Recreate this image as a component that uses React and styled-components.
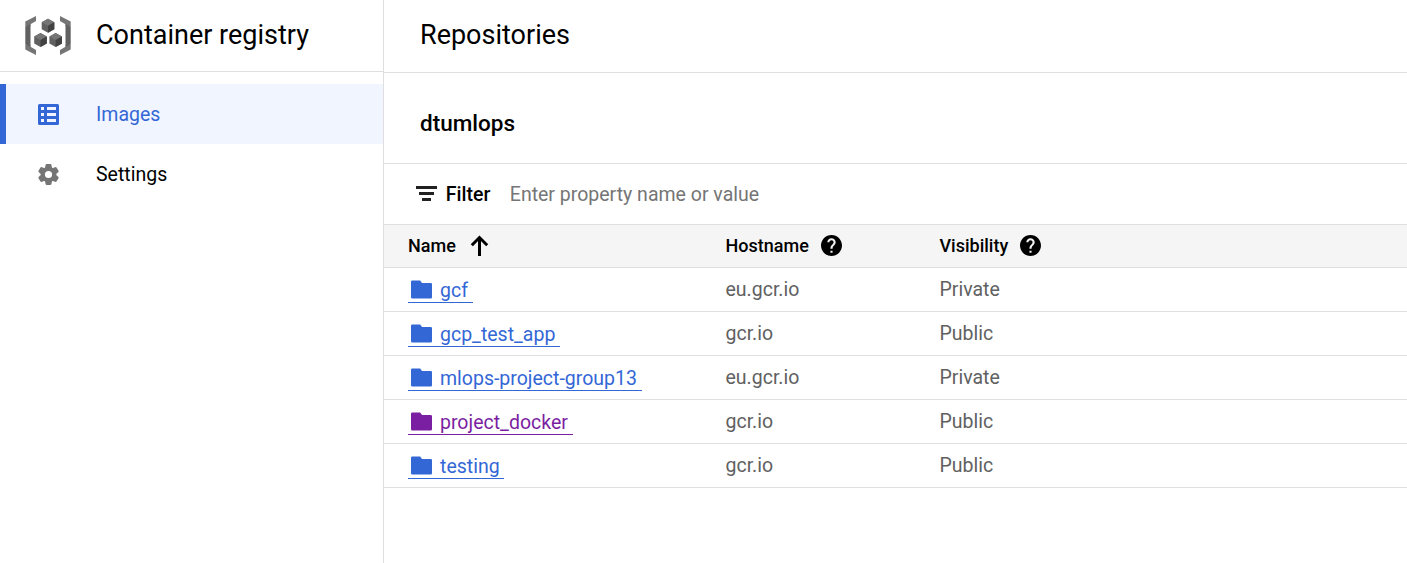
import React from "react";
import styled, { createGlobalStyle } from "styled-components";

const GlobalStyle = createGlobalStyle`
  *, *::before, *::after { box-sizing: border-box; }
  body {
    margin: 0;
    background: #fff;
    color: #000;
    font-family: Roboto, "Liberation Sans", sans-serif;
    font-size: 19.5px;
    overflow: hidden;
  }
  svg { display: block; flex: none; }
`;

const line = "#dfdfdf";
const blue = "#3367d6";
const purple = "#7b1fa2";

const Page = styled.div`
  display: flex;
  height: 100vh;
`;

const Sidebar = styled.aside`
  flex: none;
  width: 384px;
  border-right: 1px solid ${line};
`;

const Product = styled.header`
  display: flex;
  align-items: center;
  gap: 24px;
  height: 72px;
  padding: 0 0 2px 24px;
  border-bottom: 1px solid ${line};
`;

const ProductName = styled.h1`
  margin: 0;
  font-size: 27px;
  font-weight: 400;
  line-height: 36px;
`;

const Nav = styled.nav`
  padding-top: 12px;
`;

const NavItem = styled.a`
  display: flex;
  align-items: center;
  gap: 34px;
  height: 60px;
  padding-left: 29px;
  border-left: 6px solid ${(p) => (p.$active ? blue : "transparent")};
  background: ${(p) => (p.$active ? "#f0f5ff" : "transparent")};
  color: ${(p) => (p.$active ? blue : "#000")};
`;

const Main = styled.main`
  flex: 1;
  min-width: 0;
`;

const PageHeader = styled.header`
  display: flex;
  align-items: center;
  height: 73px;
  padding: 0 36px 3px;
  border-bottom: 1px solid ${line};
`;

const PageTitle = styled.h2`
  margin: 0;
  font-size: 27px;
  font-weight: 400;
  line-height: 36px;
`;

const Project = styled.div`
  display: flex;
  align-items: center;
  height: 91px;
  padding: 10px 36px 0;
  border-bottom: 1px solid ${line};
  font-size: 22.5px;
  font-weight: 500;
`;

const FilterBar = styled.div`
  display: flex;
  align-items: center;
  height: 61px;
  padding-left: 32px;
  border-bottom: 1px solid ${line};
`;

const FilterLabel = styled.span`
  width: 64px;
  margin-left: 8.8px;
  font-weight: 500;
`;

const FilterHint = styled.span`
  color: #757575;
`;

const Row = styled.div`
  display: grid;
  grid-template-columns: 317.5px 214px 1fr;
  align-items: center;
  height: 44px;
  padding-left: 24px;
  border-bottom: 1px solid ${line};
  color: #616161;
`;

const HeadRow = styled(Row)`
  height: 43px;
  padding-bottom: 1px;
  background: #f5f5f5;
  color: #000;
  font-size: 18px;
  font-weight: 500;
`;

const HeadCell = styled.div`
  display: flex;
  align-items: center;
  gap: ${(p) => p.$gap || 12}px;
`;

const RepoLink = styled.a`
  display: inline-flex;
  align-items: center;
  justify-self: start;
  gap: 8px;
  height: 25px;
  margin-top: 1px;
  padding: 0 4.7px 0 3px;
  border-bottom: 1px solid currentColor;
  color: ${(p) => (p.$visited ? purple : blue)};
`;

const RepoName = styled.span`
  padding-top: 2px;
`;

const LogoSvg = styled.svg`
  margin-top: 3px;
`;

const Logo = () => (
  <LogoSvg width="48" height="42" viewBox="24 15 48 42">
    <g fill="#757575">
      <path d="M36 16v5l-5.5 3.2v1.8l-5.2.7v-5.2z" />
      <path d="M36 55v-5l-5.5-3.2V45l-5.2-.7v5.2z" />
      <path d="M60 16v5l5.5 3.2v1.8l5.2.7v-5.2z" />
      <path d="M60 55v-5l5.5-3.2V45l5.2-.7v5.2z" />
    </g>
    <path fill="#616161" d="M25.3 26.7l5.2-2.5v22.6l-5.2-2.5zM70.7 26.7l-5.2-2.5v22.6l5.2-2.5z" />
    {[[48, 18.8], [40.5, 33], [55.7, 33]].map(([x, y]) => (
      <g key={x} transform={`translate(${x} ${y})`}>
        <path fill="#616161" d="M0 0l6.3 3.5v7L0 14l-6.3-3.5v-7z" />
        <path fill="#757575" d="M0 0l6.3 3.5L0 7l-6.3-3.5z" />
        <path fill="#424242" d="M6.3 3.5v7L0 14V7z" />
      </g>
    ))}
  </LogoSvg>
);

const ImagesIcon = () => (
  <svg width="27" height="27" viewBox="-2 -2 18 18">
    <path
      fill={blue}
      fillRule="evenodd"
      d="M1 0h12a1 1 0 0 1 1 1v12a1 1 0 0 1-1 1H1a1 1 0 0 1-1-1V1a1 1 0 0 1 1-1zM2 2v2h2V2zM6 2v2h6V2zM2 6v2h2V6zM6 6v2h6V6zM2 10v2h2v-2zM6 10v2h6v-2z"
    />
  </svg>
);

const SettingsIcon = () => (
  <svg width="27" height="27" viewBox="-13.5 -13.5 27 27" fill="#757575">
    <circle r="7.8" />
    {[0, 60, 120].map((angle) => (
      <path
        key={angle}
        transform={`rotate(${angle})`}
        d="M-2.1-10.5h4.2l.8.7.6 3.3v13l-.6 3.3-.8.7h-4.2l-.8-.7-.6-3.3v-13l.6-3.3z"
      />
    ))}
    <circle r="3.6" fill="#fff" />
  </svg>
);

const FilterSvg = styled.svg`
  margin-bottom: 1px;
`;

const FilterIcon = () => (
  <FilterSvg width="21" height="15" viewBox="0 0 21 15" fill="#212121">
    <path d="M0 0h21v3H0zM3 6h15v3H3zM6 12h9v3H6z" />
  </FilterSvg>
);

const SortIcon = () => (
  <svg width="19" height="21" viewBox="0 0 19 21" fill="none" stroke="#000" strokeWidth="3">
    <path d="M9.5 21V2.5M1.8 10.2L9.5 2.5l7.7 7.7" />
  </svg>
);

const HelpIcon = () => (
  <svg width="21" height="21" viewBox="2 2 20 20">
    <path d="M12 2C6.48 2 2 6.48 2 12s4.48 10 10 10 10-4.48 10-10S17.52 2 12 2zm1 17h-2v-2h2v2zm2.07-7.75l-.9.92C13.45 12.9 13 13.5 13 15h-2v-.5c0-1.1.45-2.1 1.17-2.83l1.24-1.26c.37-.36.59-.86.59-1.41 0-1.1-.9-2-2-2s-2 .9-2 2H8c0-2.21 1.79-4 4-4s4 1.79 4 4c0 .88-.36 1.68-.93 2.25z" />
  </svg>
);

const FolderIcon = () => (
  <svg width="21" height="19" viewBox="0 0 21 19" fill="currentColor">
    <path d="M1.3.5H9.2l1.8 2.5h8.7A1.3 1.3 0 0 1 21 4.3v12.9a1.3 1.3 0 0 1-1.3 1.3H1.3A1.3 1.3 0 0 1 0 17.2V1.8A1.3 1.3 0 0 1 1.3.5z" />
  </svg>
);

const repositories = [
  { name: "gcf", host: "eu.gcr.io", visibility: "Private" },
  { name: "gcp_test_app", host: "gcr.io", visibility: "Public" },
  { name: "mlops-project-group13", host: "eu.gcr.io", visibility: "Private" },
  { name: "project_docker", host: "gcr.io", visibility: "Public", visited: true },
  { name: "testing", host: "gcr.io", visibility: "Public" },
];

export default function App() {
  return (
    <Page>
      <GlobalStyle />
      <Sidebar>
        <Product>
          <Logo />
          <ProductName>Container registry</ProductName>
        </Product>
        <Nav>
          <NavItem $active>
            <ImagesIcon />
            Images
          </NavItem>
          <NavItem>
            <SettingsIcon />
            Settings
          </NavItem>
        </Nav>
      </Sidebar>
      <Main>
        <PageHeader>
          <PageTitle>Repositories</PageTitle>
        </PageHeader>
        <Project>dtumlops</Project>
        <FilterBar>
          <FilterIcon />
          <FilterLabel>Filter</FilterLabel>
          <FilterHint>Enter property name or value</FilterHint>
        </FilterBar>
        <HeadRow>
          <HeadCell $gap={14.5}>
            Name <SortIcon />
          </HeadCell>
          <HeadCell>
            Hostname <HelpIcon />
          </HeadCell>
          <HeadCell>
            Visibility <HelpIcon />
          </HeadCell>
        </HeadRow>
        {repositories.map((repo) => (
          <Row key={repo.name}>
            <RepoLink $visited={repo.visited}>
              <FolderIcon />
              <RepoName>{repo.name}</RepoName>
            </RepoLink>
            <span>{repo.host}</span>
            <span>{repo.visibility}</span>
          </Row>
        ))}
      </Main>
    </Page>
  );
}
